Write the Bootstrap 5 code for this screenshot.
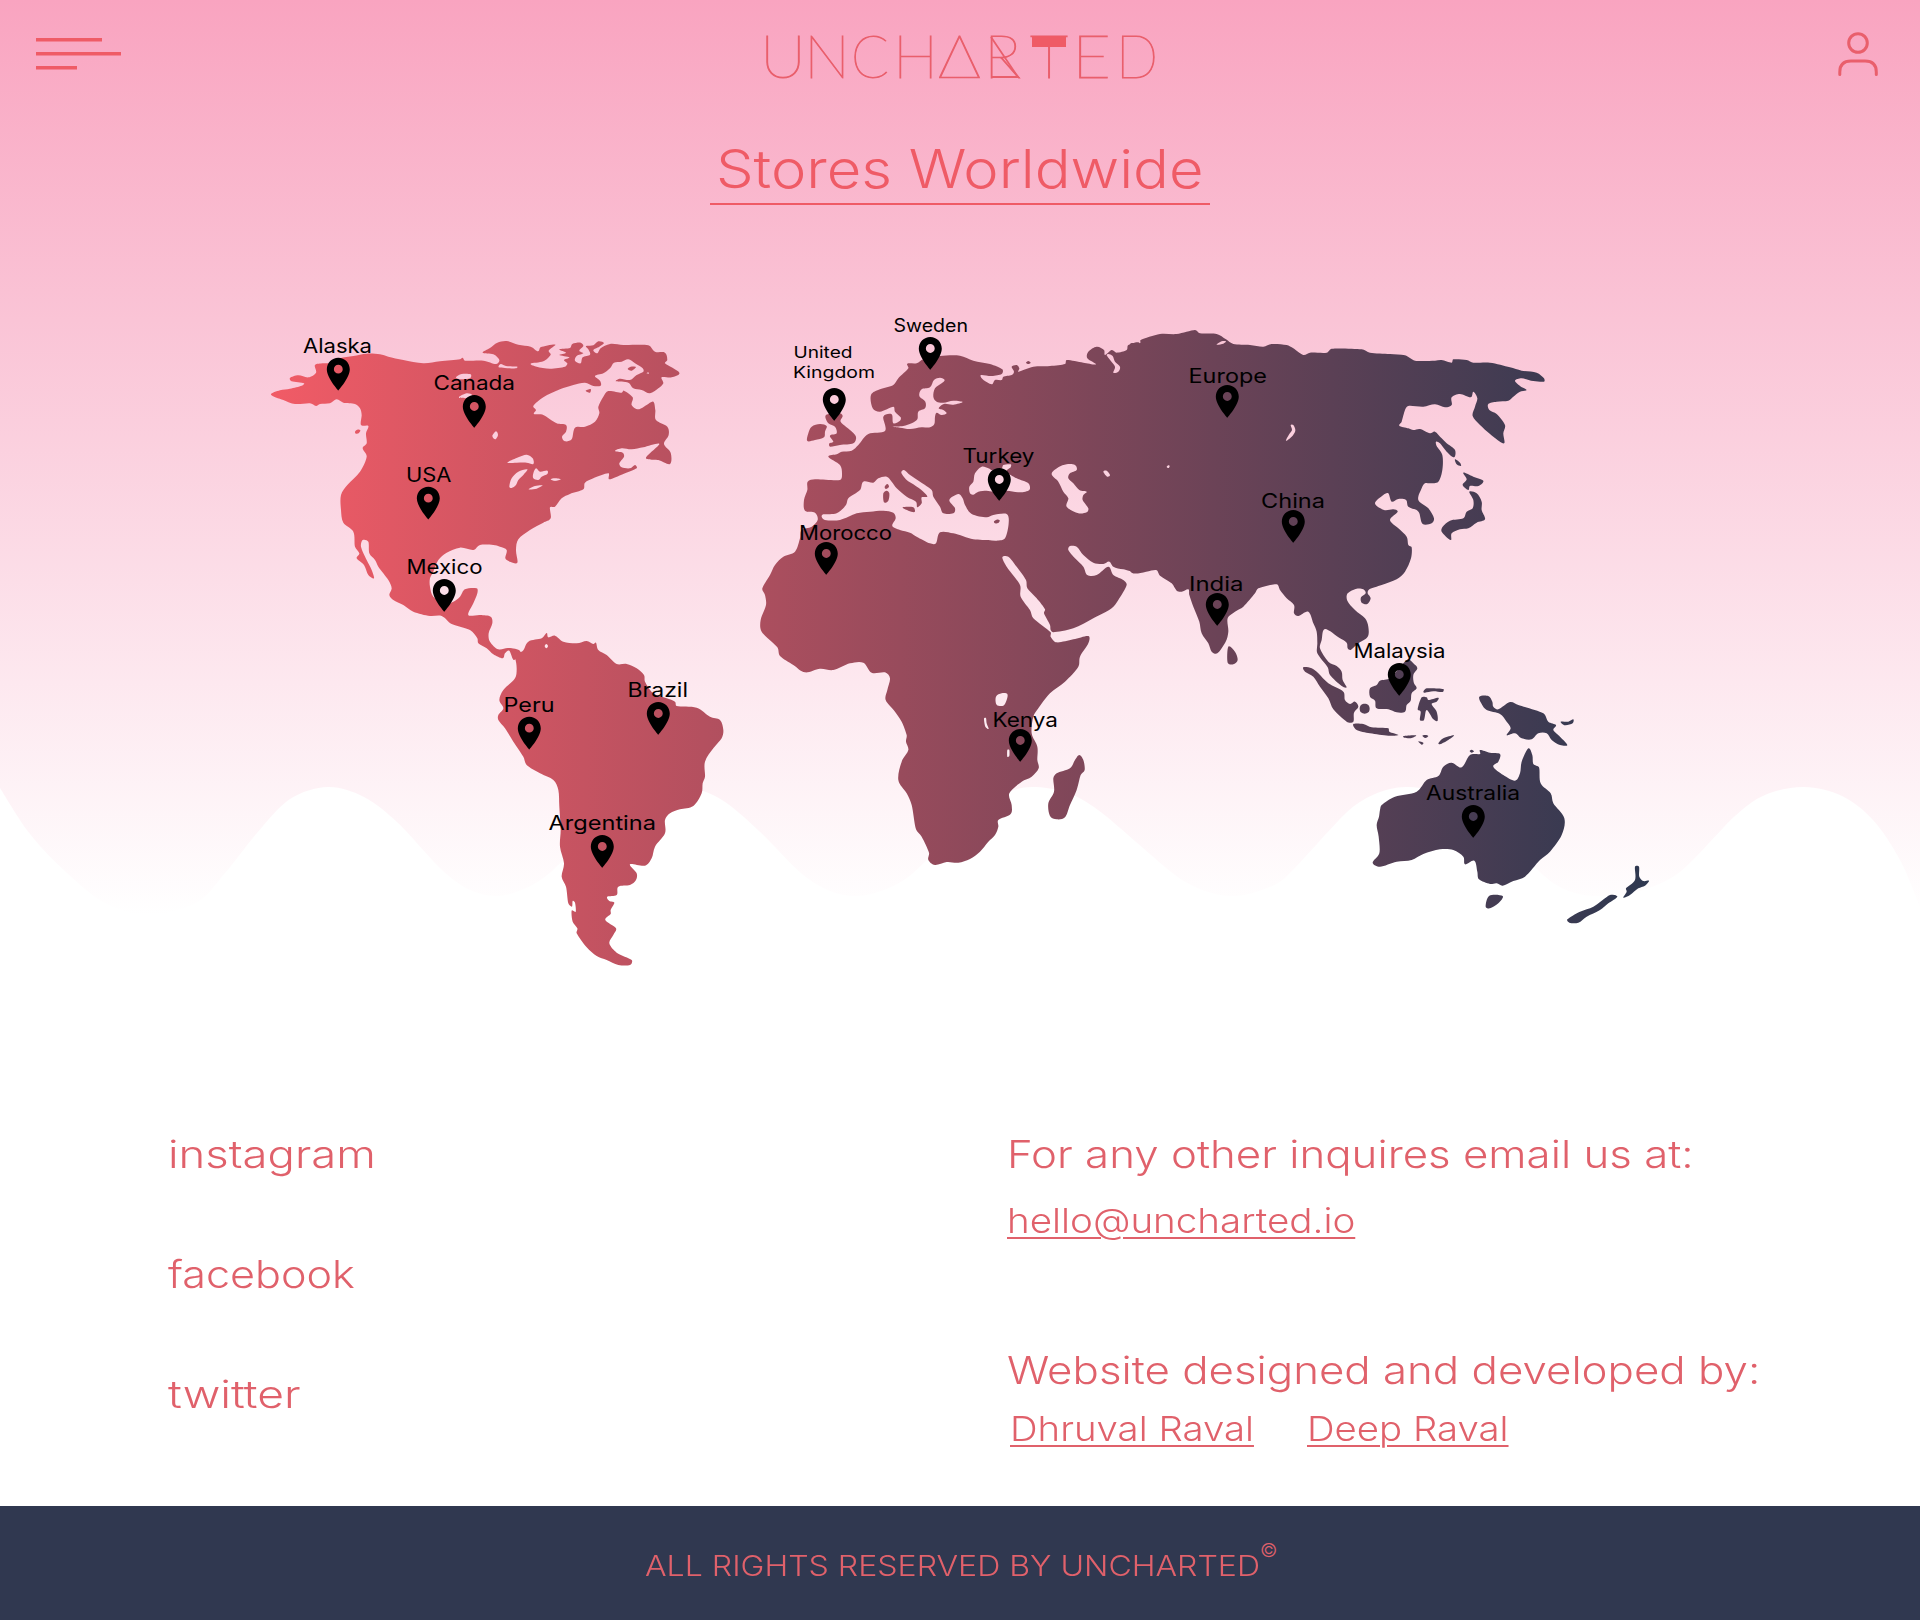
<!DOCTYPE html>
<html lang="en">
<head>
<meta charset="utf-8">
<meta name="viewport" content="width=device-width, initial-scale=1">
<title>Uncharted – Stores Worldwide</title>
<link href="https://cdn.jsdelivr.net/npm/bootstrap@5.3.0/dist/css/bootstrap.min.css" rel="stylesheet">
<style>
  body { font-family: Inter, "Open Sans", sans-serif; background: #fff; color: #e0616b; overflow-x: hidden; }
  .hero { height: 1080px; position: relative; }
  .wave-bg { position: absolute; inset: 0; z-index: -1; }
  .top-bar { height: 110px; padding: 0 36px; }
  /* Widened letterforms */
  .wide { display: inline-block; transform: scaleX(var(--w, 1.138)); transform-origin: left; }
  .page-title { color: #ef5b66; width: 500px; height: 95px; border-bottom: 2.5px solid #ef5b66; font-size: 53px; font-weight: 350; line-height: 63px; padding-top: 28px; margin: 0 auto; white-space: nowrap; text-align: center; }
  .page-title .wide { --w: 1.125; transform-origin: center; }
  .world { display: block; margin-top: 95px; }
  .world text { font-size: 19.5px; fill: #000; }
  .contact { height: 426px; font-weight: 300; font-size: 38.5px; line-height: 48px; white-space: nowrap; }
  .contact a { color: inherit; }
  .social { width: 1007px; padding: 50px 0 0 168px; gap: 72px; }
  .social .insta { --w: 1.18; }
  .social .face { --w: 1.12; }
  .social .twit { --w: 1.2; }
  .info { padding-top: 50px; }
  .info .mail { padding-top: 17px; }
  .info .credits { padding-top: 101px; }
  .info .people { gap: 78px; padding: 11px 0 0 3px; }
  .info .f-link { --w: 1.112; font-size: 34.5px; text-decoration-thickness: 2px; text-underline-offset: 4px; }
  .info .mail .f-link { --w: 1.118; }
  .legal { height: 114px; background: #303850; font-size: 29px; font-weight: 300; white-space: nowrap; padding: 6px 0 0 645px; }
  .legal .wide { --w: 1.106; }
  .legal .copy-sign { font-size: 19px; margin: -30px 0 0 59px; }
</style>
</head>
<body>
<main class="hero">
  <svg class="wave-bg" width="1920" height="1080" viewBox="0 0 1920 1080">
    <defs><linearGradient id="pink" x1="0" y1="0" x2="0" y2="915" gradientUnits="userSpaceOnUse"><stop stop-color="#f9a4c0"/><stop offset=".35" stop-color="#fac4d6"/><stop offset="1" stop-color="#fff"/></linearGradient></defs>
    <path id="wave" fill="url(#pink)"/>
  </svg>

  <header class="top-bar d-flex justify-content-between">
    <svg width="86" height="110" stroke="#ef5b66" stroke-width="3.6"><path d="M0 39.8H66M0 53.8H85M0 67.8H41"/></svg>
    <svg width="400" height="110" viewBox="760 0 400 110" fill="#ef5b66" font-family="Lato" font-weight="100" font-size="59">
      <g id="wordmark" stroke="#e95f6c" stroke-width="1"></g>
      <path d="M1032 36h34v11h-34z"/>
      <path d="M991 37L1018 77H991" fill="none" stroke="#e95f6c" stroke-width="1.8"/>
    </svg>
    <svg width="86" height="110" viewBox="1798 0 86 110" fill="none" stroke="#e95f6c" stroke-width="3" stroke-linecap="round"><circle cx="1858" cy="43" r="9.3"/><path d="M1839.800 74.500V72Q1839.800 61 1851 61H1865Q1876.300 61 1876.300 72V74.500"/></svg>
  </header>

  <h1 class="page-title"><span class="wide">Stores Worldwide</span></h1>

  <svg class="world" width="1920" height="700" viewBox="0 300 1920 700">
    <defs>
      <linearGradient id="land" x1="271" x2="1649" y1="0" y2="0" gradientUnits="userSpaceOnUse"><stop stop-color="#f15b66"/><stop offset="1" stop-color="#2e3850"/></linearGradient>
      <mask id="shapes" maskUnits="userSpaceOnUse" x="0" y="300" width="1920" height="700"><g id="mapshapes"></g></mask>
    </defs>
    <rect x="260" y="310" width="1400" height="670" fill="url(#land)" mask="url(#shapes)"/>
    <g id="pins"></g>
  </svg>
</main>

<section class="contact d-flex">
  <nav class="social d-flex flex-column align-items-start">
    <a class="wide insta text-decoration-none" href="#">instagram</a>
    <a class="wide face text-decoration-none" href="#">facebook</a>
    <a class="wide twit text-decoration-none" href="#">twitter</a>
  </nav>
  <div class="info d-flex flex-column align-items-start">
    <span class="wide">For any other inquires email us at:</span>
    <div class="mail"><a class="wide f-link" href="#">hello@uncharted.io</a></div>
    <div class="credits"><span class="wide">Website designed and developed by:</span></div>
    <div class="people d-flex"><a class="wide f-link" href="#">Dhruval Raval</a><a class="wide f-link" href="#">Deep Raval</a></div>
  </div>
</section>

<footer class="legal d-flex align-items-center"><span class="wide">ALL RIGHTS RESERVED BY UNCHARTED</span><span class="copy-sign">©</span></footer>

<script src="https://cdn.jsdelivr.net/npm/bootstrap@5.3.0/dist/js/bootstrap.bundle.min.js"></script>
<script>
  const NS = 'http://www.w3.org/2000/svg';
  // Smooth curve through a list of points, handles limited to a third of each segment.
  function smooth(str, closed) {
    const p = str.trim().split(/[;\s]+/).map(s => s.split(',').map(Number)), n = p.length;
    const at = i => closed ? p[(i + n) % n] : p[Math.max(0, Math.min(n - 1, i))];
    const handle = (a, b, dir, len) => {
      let x = (b[0] - a[0]) / 6, y = (b[1] - a[1]) / 6, l = Math.hypot(x, y) || 1, k = Math.min(1, len / 3 / l) * dir;
      return [x * k, y * k];
    };
    let d = 'M' + p[0];
    for (let i = 0; i < (closed ? n : n - 1); i++) {
      const a = at(i - 1), b = at(i), c = at(i + 1), e = at(i + 2), len = Math.hypot(c[0] - b[0], c[1] - b[1]);
      const h1 = handle(a, c, 1, len), h2 = handle(b, e, -1, len);
      d += `C${(b[0] + h1[0]).toFixed(1)},${(b[1] + h1[1]).toFixed(1)} ${(c[0] + h2[0]).toFixed(1)},${(c[1] + h2[1]).toFixed(1)} ${c}`;
    }
    return d + (closed ? 'Z' : '');
  }
  document.getElementById('wave').setAttribute('d', smooth('0,788 30,834 67,873 105,903 147,915 196,903 225,873 257,833 290,799 328,787 364,797 398,823 441,869 468,889 496,896 524,889 551,872 610,813 645,793 686,787 722,800 759,831 802,874 830,891 857,896 884,890 912,874 980,808 1005,793 1032,787 1068,793 1102,813 1175,875 1205,891 1234,896 1262,890 1285,878 1347,812 1375,794 1408,787 1460,798 1500,833 1549,880 1575,893 1604,896 1640,891 1680,872 1735,816 1765,795 1804,787 1842,796 1873,820 1900,860 1920,907') + 'V0H0Z');

  // Map sections: origin on the map, land outlines, water outlines. Three units per pixel.
  const regions = [
    { o: [260, 320], land: [
      '33,224;60,211;90,206;125,197;132,190;95,184;90,174;115,166;145,172;168,158;165,135;190,130;215,128;240,115;280,108;320,101;360,103;385,110;430,120;490,130;540,124;600,118;608,113;615,122;670,122;708,132;718,120;700,103;668,98;690,84;712,68;740,63;775,74;812,80;834,94;842,82;886,74;866,92;872,104;850,124;812,131;830,140;870,146;915,140;922,130;912,120;928,112;898,105;918,98;898,88;930,84;937,72;962,68;970,78;958,92;970,100;950,108;945,122;962,130;968,112;990,104;985,88;978,78;1000,76;1015,64;1032,69;1018,80;1000,90;1012,100;1022,85;1050,72;1090,75;1165,76;1185,95;1215,98;1222,120;1215,130;1258,158;1235,172;1205,172;1210,190;1195,205;1170,220;1145,210;1120,205;1105,188;1068,184;1080,176;1110,180;1130,165;1150,155;1148,145;1125,130;1105,118;1085,125;1062,128;1050,145;1030,160;1005,168;1020,182;1022,197;1000,198;975,188;940,195;900,208;850,232;820,258;828,270;822,282;850,285;890,310;918,315;918,335;906,350;915,364;935,358;945,323;975,320;1005,305;1018,280;1015,260;1030,230;1045,213;1085,218;1092,212;1118,232;1115,255;1135,268;1160,255;1180,245;1186,270;1188,300;1222,320;1226,345;1212,372;1232,398;1230,432;1195,420;1158,414;1198,372;1150,382;1115,388;1085,385;1065,393;1088,398;1092,410;1078,430;1085,442;1110,445;1125,435;1130,445;1090,462;1048,478;1045,460;1000,475;975,488;970,508;930,522;905,535;885,560;870,562;872,595;850,608;810,630;775,658;768,690;772,728;750,725;736,715;740,690;720,680;700,675;660,675;640,690;600,683;560,698;535,720;520,755;510,775;510,800;520,830;555,852;580,845;600,830;615,808;650,805;652,820;640,850;625,885;660,885;692,890;697,910;686,940;690,965;715,988;745,984;780,993;762,1020;748,992;735,1000;728,1015;700,1003;680,985;655,970;652,955;630,930;575,912;545,888;510,888;460,875;430,855;400,840;388,825;395,805;385,780;355,740;345,720;328,700;325,665;308,660;303,680;320,720;335,750;342,775;325,765;312,735;290,715;298,700;285,680;280,635;250,608;243,570;243,525;262,495;300,455;320,410;308,385;320,370;318,340;325,318;303,315;305,285;300,265;285,252;250,248;230,238;210,250;180,252;168,258;150,250;105,252;70,240',
      '285,335;292,329;301,331;296,340;288,341', '1103,147;1112,140;1128,141;1115,152', '977,212;992,207;990,218'],
      water: ['588,172;605,162;632,163;630,175;600,178', '597,232;620,220;637,225;625,234', '697,348;708,334;714,345;706,358', '742,428;775,412;800,404;818,415;820,432;800,428;770,428', '748,500;755,475;775,455;802,448;790,465;775,480;768,495;755,504', '820,460;828,445;840,455;862,452;862,462;845,470;835,480;820,475', '806,508;825,498;848,496;830,506', '872,478;885,475;902,478;885,483', '716,142;722,132;738,138;772,140;768,145;735,144', '1160,160;1165,157;1166,162'] },
    { o: [480, 600], land: ['90,145;125,155;145,125;185,115;200,99;205,112;225,107;250,125;290,130;320,123;340,132;348,128;355,150;380,165;410,192;440,192;470,205;492,225;495,245;520,280;560,295;585,305;590,318;650,323;690,350;720,360;730,390;725,415;700,445;675,485;675,530;668,550;665,580;640,618;600,628;570,640;555,660;555,700;525,740;515,775;495,797;450,793;470,820;468,840;450,855;415,860;410,885;382,890;388,903;403,908;392,930;392,942;376,960;408,985;400,1005;388,1030;410,1058;455,1080;450,1095;415,1095;380,1080;350,1068;320,1042;290,1000;292,985;278,965;275,932;287,935;285,908;278,903;276,920;265,910;258,860;245,830;252,790;240,740;242,690;238,620;235,570;220,540;180,520;140,495;130,470;100,425;75,385;55,360;55,345;70,325;58,300;70,270;105,235;110,205;105,175;92,155'],
      water: ['194,138;199,132;204,138;199,145'] },
    { o: [740, 300], land: [
      '393,285;420,268;460,255;475,235;505,205;502,191;530,190;550,178;600,168;660,167;700,182;750,192;787,208;785,222;755,228;723,225;728,238;755,253;765,240;785,240;790,230;815,225;822,215;815,200;830,195;838,205;835,215;880,200;930,198;975,192;980,180;1030,188;1068,193;1042,175;1045,155;1070,140;1092,150;1095,165;1115,150;1130,158;1160,150;1165,135;1200,132;1200,810;1150,808;1120,800;1108,785;1090,792;1060,788;1030,765;1010,740;990,738;985,750;1005,775;1030,800;1042,825;1070,825;1105,800;1120,825;1150,840;1160,855;1135,900;1115,925;1060,955;1000,985;940,997;932,990;930,975;912,940;915,928;890,895;862,865;858,840;830,800;805,770;787,772;800,800;840,855;842,890;870,930;880,955;932,997;932,1010;950,1027;1000,1018;1045,1008;1045,1030;1020,1070;1015,1100;975,1145;930,1180;895,1225;880,1250;875,1300;892,1340;892,1380;896,1405;875,1430;845,1445;808,1480;815,1515;812,1542;775,1560;775,1580;765,1605;745,1625;720,1655;690,1677;655,1688;620,1686;585,1695;565,1680;567,1658;545,1610;528,1588;515,1515;500,1480;475,1440;485,1385;505,1350;498,1325;500,1305;485,1265;465,1235;437,1200;442,1170;450,1135;435,1117;395,1118;370,1088;330,1090;280,1110;240,1106;195,1117;160,1095;120,1068;112,1042;65,995;62,960;78,915;75,885;67,865;90,825;105,795;130,770;165,755;180,715;185,690;215,680;233,660;225,638;195,632;192,600;202,570;203,545;225,538;300,540;306,520;300,495;265,470;290,463;305,455;335,452;355,435;385,402;435,393;430,350;455,343;460,370;480,362;482,352;465,335;460,320;420,335;398,325',
      '258,345;300,340;308,348;302,365;330,390;348,410;340,430;300,435;270,440;268,430;280,425;270,410;272,405;290,400;285,380;265,370', '205,400;215,380;240,372;260,378;255,395;252,412;225,420;202,423', '858,188;865,183;872,188;865,192',
      '940,1435;950,1420;990,1405;1005,1380;1018,1365;1030,1380;1034,1410;1022,1425;1010,1470;990,1515;975,1552;950,1558;930,1548;925,1510;942,1475'],
      water: ['458,380;490,378;515,370;532,358;535,335;555,325;556,305;538,288;545,268;570,262;582,240;600,233;614,240;605,250;585,265;580,290;590,305;610,308;640,302;668,306;640,314;612,312;596,325;610,330;620,340;605,345;590,338;585,350;583,372;570,382;545,382;510,387;480,383', '245,650;250,643;290,640;318,615;325,595;360,570;370,545;400,548;415,535;440,530;455,545;470,565;500,590;528,605;532,622;545,610;545,592;562,590;550,575;520,553;500,540;484,518;492,510;510,525;540,545;575,570;580,590;600,620;610,640;640,640;645,625;628,600;655,582;668,595;675,615;695,642;740,652;760,645;800,642;806,670;795,715;770,722;745,720;700,718;640,700;600,697;588,730;570,730;530,710;510,698;480,690;457,678;467,655;460,638;430,632;390,635;350,640;300,660;255,660', '690,580;688,560;700,545;705,520;725,500;745,505;760,512;785,505;790,495;812,493;812,502;800,515;830,535;865,550;868,570;840,577;800,572;760,575;740,572;715,575;700,584', '935,522;955,502;980,493;1005,495;1010,510;990,520;985,535;1000,550;1018,570;1040,575;1030,585;1028,600;1045,625;1040,637;1015,640;980,620;985,595;970,575;955,545', '1090,515;1100,512;1110,525;1102,530', '1100,166;1112,182;1125,200;1120,218;1135,215;1140,200;1125,185;1118,168;1105,162', '768,1190;785,1180;802,1182;800,1200;790,1217;770,1214', '732,1255;738,1254;740,1270;746,1287;736,1280', '802,1350;808,1350;808,1368;802,1370'],
      isles: ['430,580;440,572;448,580;445,602;432,607', '434,560;442,552;447,560;438,567', '488,622;520,622;524,636;505,632', '762,664;770,659;779,661;776,668;765,670'] },
    { o: [1080, 310], land: [
      '150,104;180,100;182,90;240,72;290,72;345,60;360,70;410,72;438,88;460,102;510,105;550,110;575,102;620,105;640,115;670,135;690,128;740,128;755,116;845,118;870,128;930,132;975,136;1005,152;1065,152;1085,150;1115,158;1120,148;1160,150;1180,158;1230,158;1290,172;1325,182;1370,188;1392,205;1392,215;1360,213;1325,205;1305,212;1320,228;1340,240;1320,245;1300,260;1285,272;1250,275;1225,282;1228,300;1250,312;1275,345;1270,370;1272,400;1240,380;1200,345;1178,318;1185,290;1192,265;1180,245;1172,262;1140,252;1115,262;1115,285;1095,292;1065,283;1030,290;985,288;975,300;965,335;958,347;985,355;1000,360;1020,357;1050,370;1065,365;1085,385;1100,400;1125,420;1122,442;1100,425;1080,400;1068,395;1070,408;1087,435;1087,480;1075,515;1050,520;1035,520;1025,535;1015,570;1045,595;1062,625;1055,640;1028,642;1018,610;1010,600;985,590;978,570;955,567;935,575;925,550;910,555;885,580;912,600;940,598;953,605;930,630;955,655;980,680;985,705;995,712;993,745;975,785;950,808;905,825;868,838;863,850;872,865;862,882;845,878;843,862;857,850;850,838;830,836;803,850;802,872;825,900;855,925;865,950;863,980;835,1000;812,1020;803,1015;800,998;780,985;735,957;725,990;720,1015;745,1055;770,1068;785,1085;788,1110;800,1132;785,1128;750,1095;743,1072;712,1030;712,1000;710,965;700,940;685,905;655,918;642,910;642,885;620,865;600,840;590,823;535,835;525,850;490,890;465,905;443,925;445,965;437,995;412,1030;395,1025;385,1000;365,970;358,935;340,890;328,855;325,838;305,845;290,842;275,820;240,797;228,780;150,780',
      '445,1010;465,1025;473,1050;460,1063;443,1058', '1150,488;1180,500;1210,512;1195,528;1170,528;1165,540;1148,525;1160,508', '1168,545;1190,550;1205,575;1205,600;1215,628;1190,638;1165,655;1140,658;1115,670;1112,690;1085,665;1088,650;1110,632;1150,625;1160,605;1178,595;1180,570', '1125,448;1140,458;1143,468;1130,463'],
      water: ['632,345;640,345;646,362;635,380;618,392;628,372;636,360', '260,471;265,466;269,468;266,474', '410,104;425,94;438,94;430,101'] },
    { o: [1280, 580], land: [
      '70,262;95,265;115,280;145,310;190,335;195,360;210,372;225,365;235,380;222,398;220,425;200,425;160,388;145,355;120,320;100,290;75,275', '239,386;243,375;254,371;265,375;269,386;265,397;254,401;243,397', '220,432;250,432;275,442;325,445;328,455;355,465;325,467;270,460;230,450', '370,468;408,466;395,474;372,473', '427,467;436,465;445,468;436,474', '415,484;430,488;425,494', '475,490;490,475;522,466;505,480;480,493', '430,335;440,325;490,327;488,336;460,334;435,338', '425,352;440,352;445,360;475,353;470,365;455,372;470,395;473,422;460,418;440,390;432,420;420,420;422,395;413,388', '270,325;290,315;300,302;330,295;370,250;385,238;400,250;412,265;400,285;402,310;410,325;395,340;392,362;380,375;375,395;350,397;325,388;290,385;285,362;270,350', '598,350;625,348;637,365;640,380;655,388;690,366;715,375;790,400;805,425;828,435;820,450;840,470;862,495;840,495;815,480;800,460;775,460;755,478;725,475;705,460;680,466;692,445;680,425;660,402;620,390;605,372', '842,425;865,425;880,418;878,430;855,436', '305,675;345,650;410,635;440,600;475,588;490,560;515,548;545,562;570,525;600,522;600,510;630,518;660,522;655,545;640,560;670,585;705,602;720,580;725,545;745,505;757,525;760,552;777,562;782,610;812,640;820,670;853,715;845,765;810,815;780,840;735,890;700,903;668,917;650,910;630,912;597,898;592,875;583,842;555,853;550,830;520,810;480,808;430,822;395,840;350,845;300,860;278,848;298,820;296,770;290,735;297,710;300,690', '569,513;575,509;582,514;575,518', '628,947;668,948;655,970;630,985;617,980', '862,1018;900,995;940,980;990,945;1012,950;985,970;960,990;920,1010;895,1028;868,1028', '1065,860;1077,860;1078,890;1090,903;1107,902;1095,917;1075,925;1050,945;1030,953;1040,935;1038,925;1065,900'], water: [] }
  ];
  const g = document.getElementById('mapshapes');
  const add = (parent, tag, attrs, text) => { const e = document.createElementNS(NS, tag); for (const k in attrs) e.setAttribute(k, attrs[k]); if (text) e.textContent = text; parent.appendChild(e); return e; };
  for (const [key, fill] of [['land', '#fff'], ['water', '#000'], ['isles', '#fff']])
    for (const r of regions) {
      const s = add(g, 'g', { transform: `translate(${r.o}) scale(.33333)`, fill });
      for (const pts of r[key] || []) add(s, 'path', { d: smooth(pts, true) });
    }

  // Stores: pin centre x, pin top y, then label text, left edge, baseline, width, size.
  const stores = [
    [338.3, 357.7, ['Alaska', 303, 353, 69]], [474.3, 395, ['Canada', 433.5, 390, 81.5]], [428.3, 486.7, ['USA', 406, 482, 45.5]], [444.3, 579, ['Mexico', 406.5, 574, 76]],
    [529.3, 716.7, ['Peru', 503.5, 712, 51]], [658.3, 702, ['Brazil', 627.500, 697, 60.5]], [602.3, 835, ['Argentina', 548.5, 830, 107.5]],
    [930.3, 337, ['Sweden', 893.5, 332, 74.5, 18]], [834.3, 388, ['United', 793.5, 358, 59, 16.5], ['Kingdom', 793, 378, 82, 16.5]],
    [999.3, 468, ['Turkey', 962.5, 463, 72]], [826.3, 542, ['Morocco', 799, 540, 93]], [1020.3, 729, ['Kenya', 992.5, 727, 65.5]],
    [1227.3, 385, ['Europe', 1188.500, 383, 78.5]], [1293.3, 510, ['China', 1261, 508, 64]], [1217.3, 593, ['India', 1189, 591, 54.5]],
    [1399.3, 663, ['Malaysia', 1353.500, 658, 92]], [1473.3, 805, ['Australia', 1426, 800, 94]]
  ];
  const pins = document.getElementById('pins');
  for (const [x, y, ...labels] of stores) {
    add(pins, 'path', { d: 'M12 2C8.13 2 5 5.13 5 9c0 5.25 7 13 7 13s7-7.75 7-13c0-3.87-3.13-7-7-7zm0 9.700a2.700 2.700 0 1 1 0-5.400 2.700 2.700 0 0 1 0 5.400z', transform: `translate(${x - 12 * 1.64} ${y - 2 * 1.64}) scale(1.64)` });
    for (const [t, lx, ly, w, size] of labels) add(pins, 'text', { x: lx, y: ly, textLength: w, lengthAdjust: 'spacingAndGlyphs', style: size ? `font-size:${size}px` : '' }, t);
  }

  // Wordmark letters: character, left edge, width.
  for (const [c, x, w] of [['U', 760, 46], ['N', 804, 46], ['C', 851, 38], ['H', 893, 45], ['Δ', 938, 43], ['R', 984, 37], ['T', 1030, 38], ['E', 1072, 39], ['D', 1116, 42]])
    add(document.getElementById('wordmark'), 'text', { x, y: 78, textLength: w, lengthAdjust: 'spacingAndGlyphs' }, c);
</script>
</body>
</html>
